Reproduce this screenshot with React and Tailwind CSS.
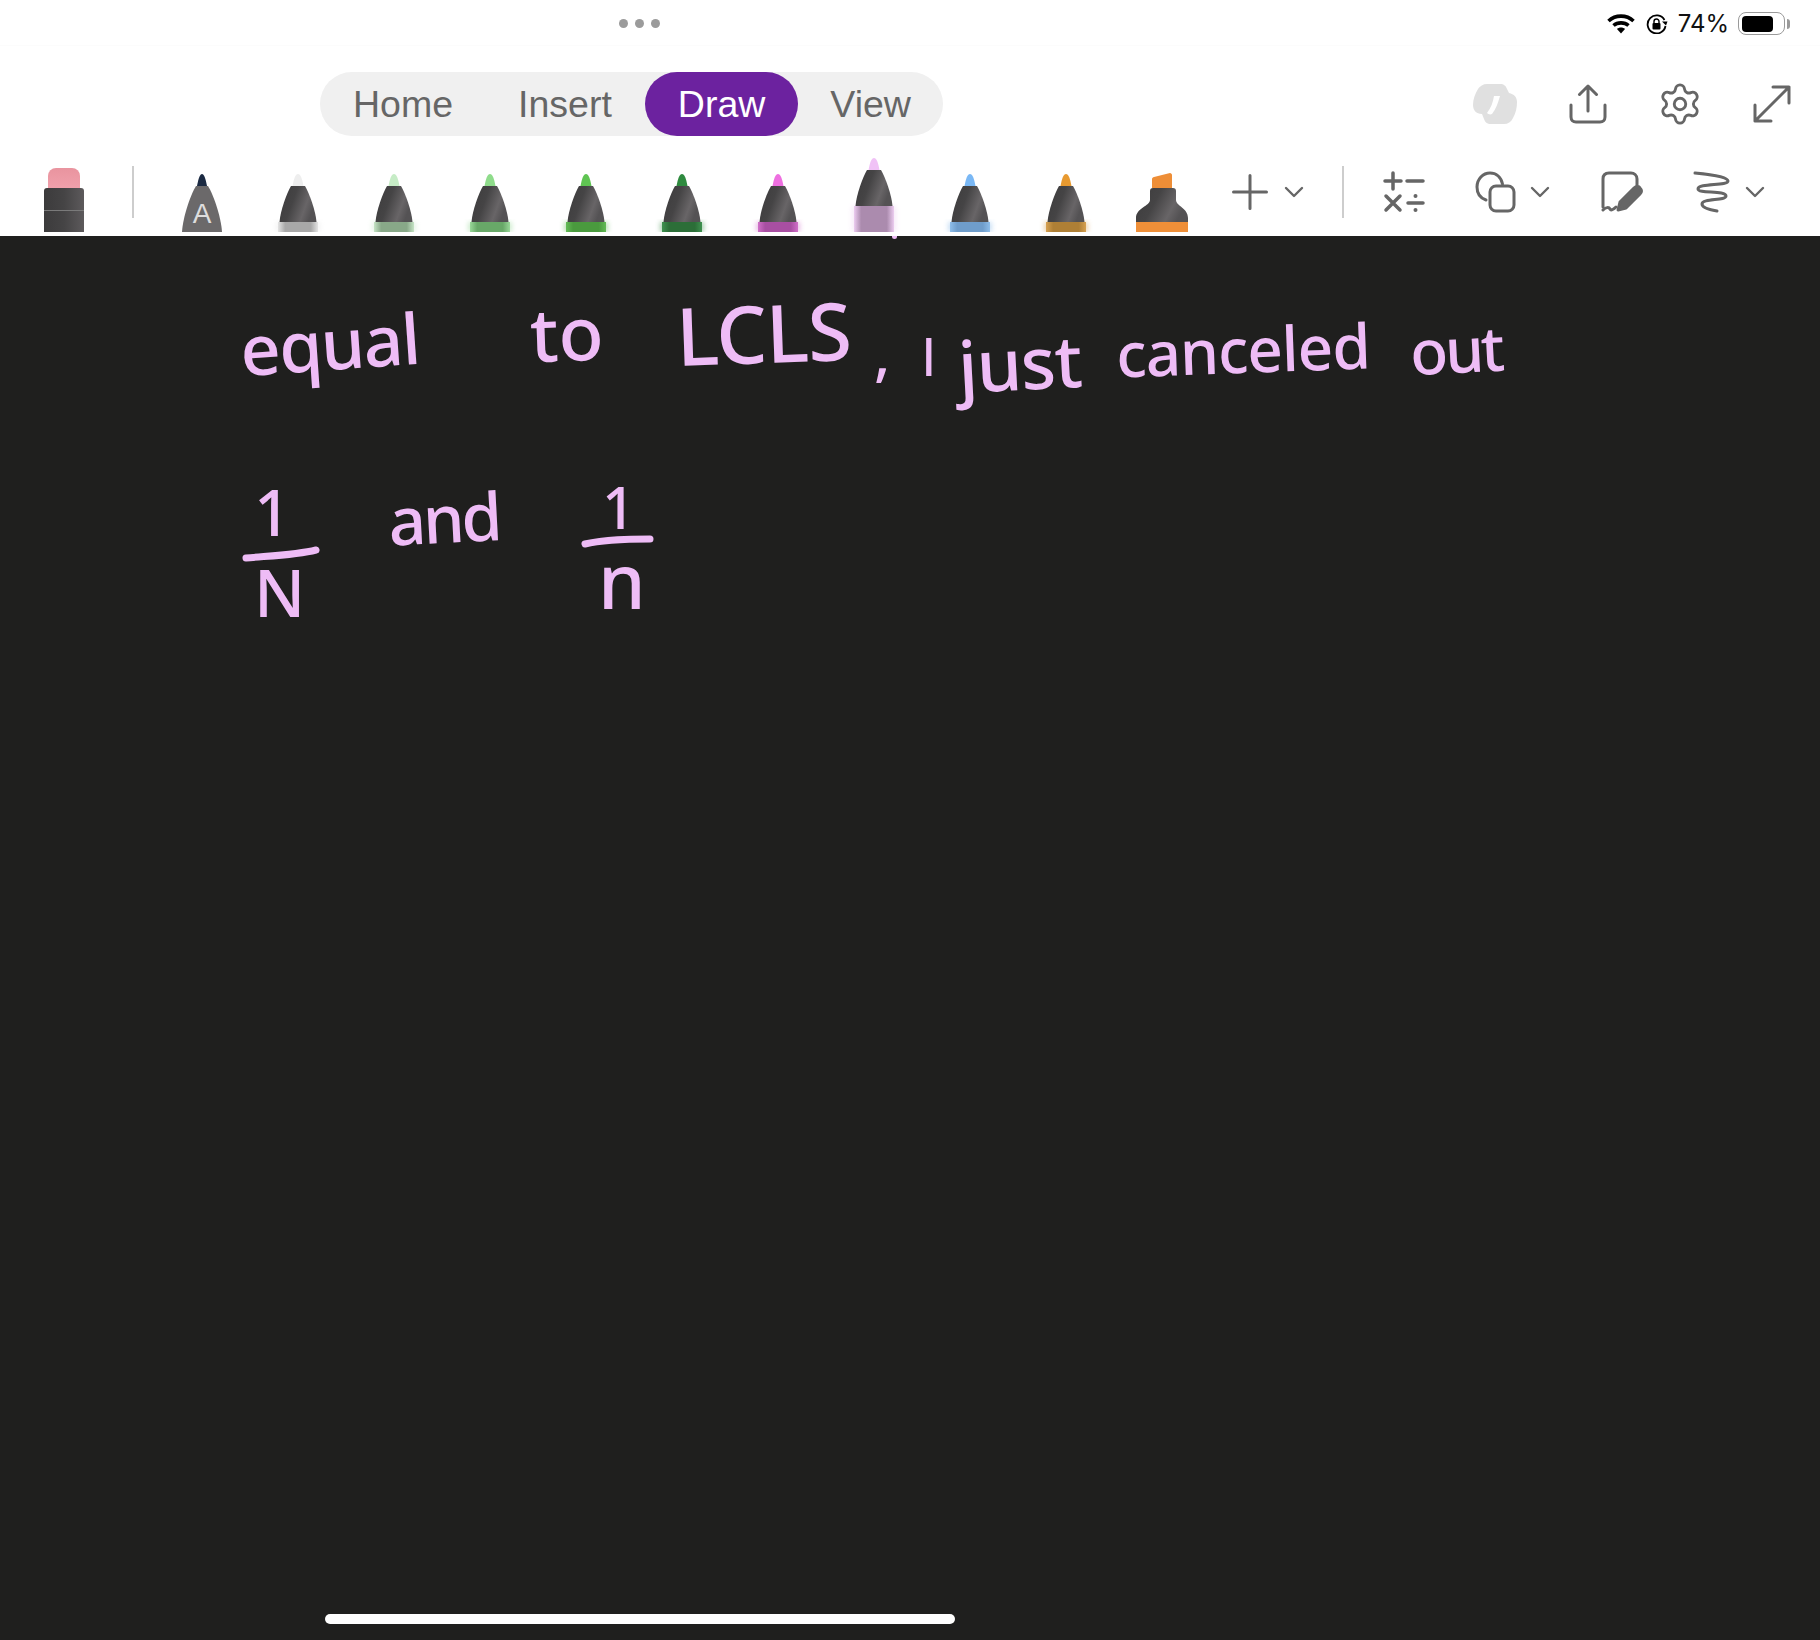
import React from 'react'
import { ChevronDown, Settings } from 'lucide-react'

const pens = [
  { tip: '#eeeeee', band: '#a8a8a8', edge: '#e4e4e4' },
  { tip: '#c6ecc6', band: '#88a888', edge: '#c6e4c6' },
  { tip: '#8fdc8b', band: '#68a868', edge: '#9ad89a' },
  { tip: '#5fc452', band: '#4a9a3e', edge: '#62bb55' },
  { tip: '#2f8a3f', band: '#2c6e38', edge: '#3f9150' },
  { tip: '#ee6fe0', band: '#a84fa2', edge: '#d070c8' },
  { tip: '#f0c2f6', band: '#ab8bae', edge: '#ecccf0', selected: true },
  { tip: '#7ab8f5', band: '#6f9dcb', edge: '#8fbeea' },
  { tip: '#e89a30', band: '#ae7f35', edge: '#d6a050' },
]

function BodyGradient({ id }) {
  return (
    <linearGradient id={id} x1="0" y1="0" x2="1" y2="0.35">
      <stop offset="0" stopColor="#3c3b3c" />
      <stop offset="0.45" stopColor="#454445" />
      <stop offset="0.8" stopColor="#686567" />
      <stop offset="1" stopColor="#545254" />
    </linearGradient>
  )
}

function Pen({ tip, band, edge, selected, id }) {
  // everything shifts up 16px when the pen is picked
  const s = selected ? 16 : 0
  return (
    <svg width="96" height="92" viewBox="0 0 96 92" className="shrink-0">
      <defs>
        <BodyGradient id={`body-${id}`} />
        <linearGradient id={`band-${id}`} x1="0" y1="0" x2="1" y2="0">
          <stop offset="0" stopColor={edge} />
          <stop offset="0.18" stopColor={band} />
          <stop offset="0.82" stopColor={band} />
          <stop offset="1" stopColor={edge} />
        </linearGradient>
        <filter id={`glow-${id}`} x="-30%" y="-30%" width="160%" height="160%">
          <feGaussianBlur stdDeviation="2.5" />
        </filter>
      </defs>
      <rect x="26" y={82 - s} width="44" height={10 + s} fill={edge} opacity="0.45" filter={`url(#glow-${id})`} />
      <path d={`M42.500 ${46 - s} C44 ${38 - s} 45.500 ${34 - s} 48 ${34 - s} C50.500 ${34 - s} 52 ${38 - s} 53.500 ${46 - s} Z`} fill={tip} />
      <path d={`M41 ${46 - s} L55 ${46 - s} C59.500 ${54 - s} 65.500 ${70 - s} 66.500 ${82 - s} L29.500 ${82 - s} C30.500 ${70 - s} 36.500 ${54 - s} 41 ${46 - s} Z`} fill={`url(#body-${id})`} />
      <rect x="28" y={82 - s} width="40" height={10 + s} fill={`url(#band-${id})`} />
    </svg>
  )
}

function AutoPen() {
  return (
    <svg width="96" height="92" viewBox="0 0 96 92" className="shrink-0">
      <path d="M43 46 C44.500 38 46 34 48 34 C50 34 51.500 38 53 46 Z" fill="#1b2a42" />
      <path d="M42 46 L54 46 C59 54 67 76 68 92 L28 92 C29 76 37 54 42 46 Z" fill="#6b696a" />
      <text x="48" y="83" textAnchor="middle" fontSize="28" fill="#dddddd" fontFamily="Liberation Sans, sans-serif">A</text>
    </svg>
  )
}

function Highlighter() {
  return (
    <svg width="96" height="92" viewBox="0 0 96 92" className="shrink-0">
      <defs>
        <BodyGradient id="body-hl" />
      </defs>
      <path d="M38 39 C38 38 39 37 40 37 L56 33 C57 33 58 34 58 35 L58 48 L38 48 Z" fill="#ee8e37" />
      <path d="M36 51 C36 49 37 48 39 48 L59 48 C61 48 62 49 62 51 L62 60 C62 66 74 68 74 78 L74 82 L22 82 L22 78 C22 68 36 66 36 60 Z" fill="url(#body-hl)" />
      <rect x="22" y="82" width="52" height="10" fill="#ef8f38" />
    </svg>
  )
}

function Chevron() {
  return <ChevronDown size={32} strokeWidth={1.800} className="text-[#666666]" />
}

function Ink({ className, children }) {
  return <span className={`absolute whitespace-nowrap leading-none font-medium text-[#eebcf6] ${className}`}>{children}</span>
}

export default function App() {
  return (
    <div className="flex flex-col w-[1820px] h-[1640px] bg-white font-['Liberation_Sans',sans-serif] overflow-hidden">
      {/* status bar */}
      <div className="flex items-center h-[46px] pt-[2px] border-b border-[#fcfcfc] shrink-0">
        <div className="flex gap-[7px] ml-[619px]">
          <span className="w-[9px] h-[9px] rounded-full bg-[#9b9b9b]" />
          <span className="w-[9px] h-[9px] rounded-full bg-[#9b9b9b]" />
          <span className="w-[9px] h-[9px] rounded-full bg-[#9b9b9b]" />
        </div>
        <div className="flex items-center ml-auto mr-[30px]">
          <svg width="28" height="20" viewBox="0 0 28 20" fill="none" stroke="#000000" strokeWidth="3.600" strokeLinecap="butt">
            <path d="M1.500 7 C8.500 0.500 19.500 0.500 26.500 7" />
            <path d="M6.500 11.500 C10.500 8 17.500 8 21.500 11.500" />
            <path d="M14 19.500 L10 15 C12 13 16 13 18 15 Z" fill="#000000" stroke="none" />
          </svg>
          <svg width="22" height="20" viewBox="0 0 22 20" fill="none" className="ml-[11px]">
            <path d="M18.500 6 A9 9 0 1 0 19.500 12" stroke="#000000" strokeWidth="1.800" />
            <path d="M16 7.500 L21.500 7.500 L20 11.500 Z" fill="#000000" />
            <rect x="6.500" y="9" width="8" height="6.500" rx="1" fill="#000000" />
            <path d="M8 9 V7.500 A2.500 2.500 0 0 1 13 7.500 V9" stroke="#000000" strokeWidth="1.400" />
          </svg>
          <span className="ml-[10px] text-[24px] leading-none text-[#111111] font-['Inter',sans-serif]">74%</span>
          <div className="flex items-center ml-[9px]">
            <div className="flex items-center w-[47px] h-[23px] p-[3px] rounded-[8px] border border-[#9a9a9a]">
              <div className="w-[31px] h-[16px] rounded-[4px] bg-black" />
            </div>
            <div className="w-[3px] h-[10px] ml-[2px] rounded-r-full bg-[#9a9a9a]" />
          </div>
        </div>
      </div>

      {/* tabs + actions */}
      <div className="flex items-start h-[94px] pt-[26px] shrink-0">
        <div className="flex items-center h-[64px] ml-[320px] pt-px rounded-full bg-[#f0f0f0] text-[37.5px] text-[#666666]">
          <div className="flex items-center h-full px-[33px]">Home</div>
          <div className="flex items-center h-full pl-[32px] pr-[33px]">Insert</div>
          <div className="flex items-center h-[64px] mt-[-1px] px-[33px] rounded-full bg-[#6c229f] text-white">Draw</div>
          <div className="flex items-center h-full px-[32px]">View</div>
        </div>
        <div className="flex items-center ml-auto mr-[29px] h-[64px]">
          <svg width="44" height="42" viewBox="0 0 44 42">
            <path d="M14 1 L27 1 C31 1 33 3 34 6 L36 10 C41 11 44 14 44 19 C44 24 43 30 40 35 C38 39 35 41 31 41 L18 41 C14 41 12 39 11 36 L9 31 C3 31 0 27 0 22 C0 16 2 11 5 6 C7 3 10 1 14 1 Z" fill="#e0e0e0" />
            <path d="M21 13 L27 13 C25 20 23 26 19 31 C17 32 15 31 14 30 C18 25 20 19 21 13 Z" fill="#ffffff" />
          </svg>
          <svg width="38" height="40" viewBox="0 0 38 40" fill="none" stroke="#666666" strokeWidth="3" strokeLinecap="round" strokeLinejoin="round" className="ml-[52px]">
            <path d="M19 27 V3 M10.500 10.500 L19 2 L27.500 10.500" />
            <path d="M2 21 V33 C2 36 4 38 7 38 H31 C34 38 36 36 36 33 V21" />
          </svg>
          <Settings size={46} strokeWidth={1.500} className="text-[#666666] ml-[50px]" />
          <svg width="38" height="38" viewBox="0 0 38 38" fill="none" stroke="#666666" strokeWidth="3" strokeLinecap="round" strokeLinejoin="round" className="ml-[50px]">
            <path d="M36 2 L2 36 M20 2 H36 V18 M2 20 V36 H18" />
          </svg>
        </div>
      </div>

      {/* pens */}
      <div className="flex items-end h-[96px] pb-[4px] shrink-0">
        <div className="relative flex flex-col items-center w-[40px] h-[64px] ml-[44px]">
          <div className="w-[32px] h-[20px] rounded-t-[8px] bg-gradient-to-b from-[#e9949f] to-[#f0a0ab]" />
          <div className="w-full h-[45px] rounded-t-[3px] bg-gradient-to-r from-[#3c3b3c] via-[#454445] to-[#5d5a5c]" />
          <div className="absolute left-0 right-0 top-[42px] h-px bg-[#7a7a7a]" />
        </div>
        <div className="w-[2px] h-[52px] ml-[48px] mb-[14px] bg-[#cdcdcd]" />
        <div className="flex ml-[20px]">
          <AutoPen />
          {pens.map((p, i) => (
            <Pen key={i} id={i} {...p} />
          ))}
          <Highlighter />
        </div>
        <div className="flex items-center h-[44px] mb-[18px] ml-[22px]">
          <svg width="36" height="36" viewBox="0 0 36 36" fill="none" stroke="#666666" strokeWidth="3" strokeLinecap="round">
            <path d="M18 1.500 V34.500 M1.500 18 H34.500" />
          </svg>
          <div className="ml-[10px]"><Chevron /></div>
        </div>
        <div className="w-[2px] h-[52px] ml-[32px] mb-[14px] bg-[#cdcdcd]" />
        <div className="flex items-center h-[44px] mb-[18px] ml-[39px]">
          <svg width="42" height="42" viewBox="0 0 42 42" fill="none" stroke="#666666" strokeWidth="3.500" strokeLinecap="round">
            <path d="M10 2 V18 M2 10 H18 M24 10 H40 M3 25 L17 39 M17 25 L3 39 M25 32 H40" />
            <circle cx="32.500" cy="25" r="2" fill="#666666" stroke="none" />
            <circle cx="32.500" cy="39" r="2" fill="#666666" stroke="none" />
          </svg>
        </div>
        <div className="flex items-center h-[44px] mb-[18px] ml-[50px]">
          <svg width="42" height="42" viewBox="0 0 42 42" fill="none" stroke="#666666" strokeWidth="3" strokeLinejoin="round">
            <path d="M11 29 C5 27 2 22 2 16 C2 8 8 2 15 2 C21 2 26 6 27.500 13" strokeLinecap="round" />
            <rect x="15" y="15" width="24" height="25" rx="6" />
          </svg>
          <div className="ml-[7px]"><Chevron /></div>
        </div>
        <div className="flex items-center h-[44px] mb-[18px] ml-[45px]">
          <svg width="42" height="42" viewBox="0 0 42 42" fill="none" stroke="#666666" strokeWidth="3" strokeLinecap="round" strokeLinejoin="round">
            <path d="M2 36 V8 C2 4 4 2 8 2 H30 C33 2 36 4 36 8 V17" />
            <path d="M2 39 C5 36 8 36 9 38 C10 40 13 38 15 36" />
            <path d="M17 39 L19 31 L33 17 C35 15 38 15 39 17 C41 19 41 21 39 23 L25 37 Z" fill="#666666" />
          </svg>
        </div>
        <div className="flex items-center h-[44px] mb-[18px] ml-[50px]">
          <svg width="38" height="42" viewBox="0 0 38 42" fill="none" stroke="#666666" strokeWidth="3" strokeLinecap="round" strokeLinejoin="round">
            <path d="M2 2 C14 3 35 6 35 10 C35 15 5 12 5 18 C5 23 33 19 33 25 C33 30 9 27 9 33 C9 37 18 39 24 40" />
          </svg>
          <div className="ml-[8px]"><Chevron /></div>
        </div>
      </div>

      {/* notebook page */}
      <div className="relative flex-1 bg-[#1f1f1e] font-['Noto_Sans',sans-serif]">
        <div className="absolute left-[892px] top-0 w-[5px] h-[3px] rounded-b-full bg-[#eebcf6]" />
        <Ink className="left-[240px] top-[72px] text-[70px] tracking-[-1.500px] rotate-[-4deg]">equal</Ink>
        <Ink className="left-[530px] top-[60px] text-[74px] rotate-[-2deg]">to</Ink>
        <Ink className="left-[676px] top-[56px] text-[80px] tracking-[-1px] rotate-[-2deg]">LCLS</Ink>
        <Ink className="left-[874px] top-[86px] text-[60px]">,</Ink>
        <Ink className="left-[921px] top-[93px] text-[56px] font-['Liberation_Sans',sans-serif]">I</Ink>
        <Ink className="left-[958px] top-[90px] text-[72px] tracking-[-1px] rotate-[-3deg]">just</Ink>
        <Ink className="left-[1116px] top-[82px] text-[62px] tracking-[-1px] rotate-[-2deg]">canceled</Ink>
        <Ink className="left-[1410px] top-[82px] text-[62px] tracking-[-3px] rotate-[-3deg]">out</Ink>
        <Ink className="left-[254px] top-[244px] text-[64px]">1</Ink>
        <svg width="80" height="18" viewBox="0 0 80 18" className="absolute left-[242px] top-[308px]" fill="none" stroke="#eebcf6" strokeWidth="7" strokeLinecap="round">
          <path d="M4 14 C25 12 55 11 74 6" />
        </svg>
        <Ink className="left-[254px] top-[322px] text-[66px]">N</Ink>
        <Ink className="left-[388px] top-[248px] text-[66px] tracking-[-3px] rotate-[-3deg]">and</Ink>
        <Ink className="left-[602px] top-[242px] text-[58px]">1</Ink>
        <svg width="76" height="16" viewBox="0 0 76 16" className="absolute left-[580px] top-[297px]" fill="none" stroke="#eebcf6" strokeWidth="7" strokeLinecap="round">
          <path d="M5 11 C25 6 50 6 70 6" />
        </svg>
        <Ink className="left-[598px] top-[306px] text-[76px]">n</Ink>
        {/* home indicator */}
        <div className="absolute left-[325px] bottom-[16px] w-[630px] h-[10px] rounded-full bg-white" />
      </div>
    </div>
  )
}
